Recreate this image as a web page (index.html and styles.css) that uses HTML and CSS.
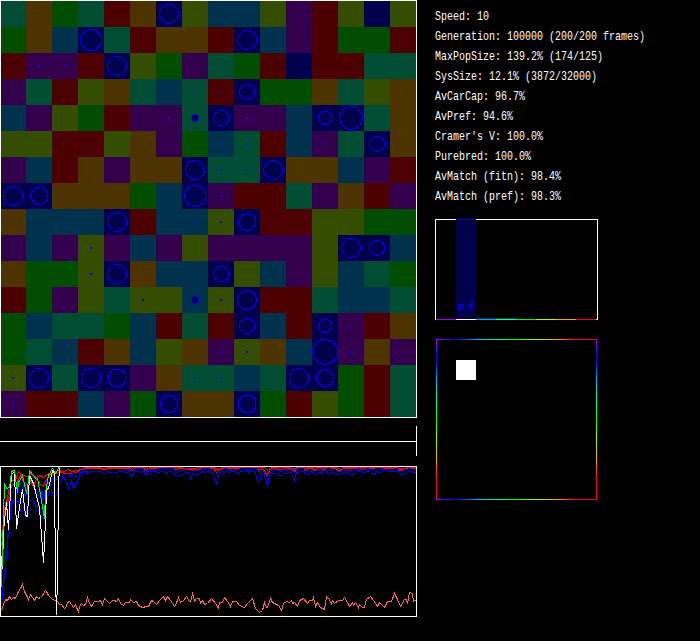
FILE: index.html
```html
<!DOCTYPE html>
<html lang="en">
<head>
    <meta charset="UTF-8">
    <meta name="viewport" content="width=device-width, initial-scale=1.0">
    <title>Population Simulation</title>
    <link rel="stylesheet" href="styles.css">
</head>
<body>
    <main class="simulation">
        <div class="left">
            <svg id="world" class="world" width="417" height="418"></svg>

            <svg class="timeline" width="417" height="30">
                <path d="M0 15.5H416.5M416.5 0V30"/>
            </svg>

            <svg class="history" width="417" height="151">
                <g transform="translate(.5 .5)">
                    <polyline class="line salmon" points="1,144 3,138 5,133 7,134 9,130 11,133 13,131 15,132 17,127 20,122 22,118 24,125 26,129 28,133 30,128 32,131 34,134 36,130 38,132 40,131 42,129 45,124 46,125 48,129 51,132 54,134 57,135 59,138 61,138 64,142 66,140 67,136 69,135 71,138 73,141 75,138 76,141 78,145 79,140 81,137 83,139 85,138 87,131 89,137 91,140 94,135 97,135 100,134 102,138 104,132 107,135 109,137 112,134 114,134 116,135 118,132 120,137 123,139 125,136 129,136 130,133 133,136 136,135 138,139 142,141 146,140 148,140 151,134 153,135 156,138 159,134 163,130 165,134 167,130 170,134 174,140 175,139 178,131 180,136 183,134 186,130 189,135 191,134 192,126 194,135 196,132 199,132 200,137 202,134 204,138 207,137 211,132 215,137 218,142 219,136 222,136 224,131 227,135 230,140 232,135 236,135 239,139 244,141 247,137 252,132 255,142 259,146 262,144 264,136 266,141 267,141 270,132 272,136 278,139 281,144 283,137 286,135 289,136 291,134 292,137 294,136 297,140 299,134 303,132 307,137 309,134 312,134 313,131 315,140 317,136 320,141 324,143 326,130 328,132 331,137 332,134 334,137 338,134 342,134 344,131 347,136 349,140 352,136 353,139 355,136 358,141 359,138 362,141 364,141 366,133 370,130 373,134 377,140 379,136 381,138 384,141 387,135 391,135 394,127 397,133 400,140 404,133 406,133 407,137 409,126 412,127 413,135 416,133"/>
                    <polyline class="line blue" points="1,130 4,108 6,85 9,58 12,34 14,35 16,25 18,36 20,45 22,35 25,50 28,28 30,35 33,32 36,45 38,36 40,46 43,55 46,35 50,20 54,33 58,20 63,9 68,22 71,14 73,22 77,14 80,8 85,4 87,8 90,5 100,5 103,8 108,5 112,7 118,5 122,5 125,6 128,5 131,10 134,4 140,6 143,4 145,9 148,5 150,8 153,5 158,6 163,4 166,8 168,5 173,6 176,10 179,8 182,9 185,6 188,6 190,12 192,7 197,9 200,6 202,3 205,7 208,4 212,6 215,15 216,17 218,9 220,6 222,8 225,5 230,6 233,4 238,8 240,5 245,4 249,6 252,4 255,6 257,16 259,16 261,7 264,9 267,20 269,10 272,7 277,7 281,10 284,7 290,6 292,9 294,14 296,6 303,5 305,8 308,8 310,4 315,8 319,5 321,8 325,4 328,8 331,5 335,8 340,8 344,5 348,8 353,8 356,5 360,4 362,6 367,5 370,5 373,9 376,5 379,7 382,4 389,5 395,5 398,4 400,8 404,8 408,4 411,6 413,5 416,8"/>
                    <polyline class="line blue" points="1,138 3,118 5,100 7,74 9,50 11,28 14,20 17,27 20,12 24,28 26,31 28,20 32,14 35,24 38,30 41,22 43,38 46,14 50,18 53,10 55,14 60,5 64,6 68,10 71,6 73,12 78,8 84,3 90,2 100,2 103,4 110,2 121,2 124,4 129,3 131,5 133,2 142,2 145,6 149,3 153,5 156,3 163,2 169,3 173,2 176,6 179,4 187,3 191,4 198,4 201,2 208,2 212,3 215,5 217,8 220,5 224,2 230,4 235,3 241,2 249,3 253,2 256,3 260,6 262,3 265,8 268,13 270,5 273,3 280,5 285,4 290,3 294,6 297,2 303,2 305,5 310,2 315,5 317,3 320,5 322,3 325,6 327,3 332,4 335,3 339,6 342,3 348,4 354,4 359,2 362,4 367,2 372,3 375,5 380,2 385,3 391,2 397,2 399,5 403,3 413,2 416,4"/>
                    <polyline class="line red" points="1,80 3,58 5,42 7,38 9,27 11,19 16,17 20,9 25,19 30,14 33,20 36,12 40,18 43,20 45,14 50,8 55,7 60,6 66,7 70,7 72,5 76,6 80,3 86,2 100,2 103,3 110,2 130,2 132,4 135,1 142,1 146,4 149,1 153,2 160,1 173,1 175,3 179,2 186,2 189,3 198,3 201,1 206,1 213,2 216,6 219,3 224,1 229,2 235,2 241,1 256,1 259,4 262,2 267,9 270,2 273,2 280,3 285,2 291,2 294,5 296,1 303,1 305,4 309,1 315,4 319,1 322,4 326,1 335,2 339,5 342,1 346,2 353,2 359,1 362,3 365,1 372,2 376,1 389,2 397,1 399,4 403,2 408,1 413,2 416,3"/>
                    <polyline class="line red" points="1,71 3,55 4,41 7,31 9,20 11,14 15,14 18,5 22,9 27,10 30,7 35,12 39,9 43,11 48,7 53,7 57,4 63,5 68,3 72,5 80,3 85,1 100,1 103,2 107,1 145,1 148,2 152,1 175,1 190,2 202,1 213,1 217,3 222,1 255,1 264,1 268,5 271,1 290,1 293,3 296,1 313,1 335,1 340,3 343,1 395,1 400,2 416,1"/>
                    <polyline class="line white" points="0,127 1,90 2,102 3,64 6,36 8,63 11,7 14,6 16,62 19,41 22,23 25,49 27,50 29,9 33,17 35,25 39,41 41,69 43,96 45,54 46,23 48,22 52,4 54,7 55,113 56,148 57,111 58,20 59,0"/>
                    <polyline class="line green" points="1,121 2,80 4,17 6,22 9,21 11,6 12,4 14,4 17,26 18,16 22,9 26,27 28,15 29,4 36,13 37,12 41,34 44,52 45,27 48,9 52,2 55,7 58,2 59,0"/>
                </g>
                <rect class="frame" x=".5" y=".5" width="416" height="150"/>
            </svg>
        </div>

        <div class="right">
            <ul class="stats">
                <li>Speed: 10</li>
                <li>Generation: 100000 (200/200 frames)</li>
                <li>MaxPopSize: 139.2% (174/125)</li>
                <li>SysSize: 12.1% (3872/32000)</li>
                <li>AvCarCap: 96.7%</li>
                <li>AvPref: 94.6%</li>
                <li>Cramer's V: 100.0%</li>
                <li>Purebred: 100.0%</li>
                <li>AvMatch (fitn): 98.4%</li>
                <li>AvMatch (pref): 98.3%</li>
            </ul>

            <svg class="histogram" width="163" height="101">
                <rect class="frame" x=".5" y=".5" width="162" height="100"/>
                <rect x="21" y="0" width="20" height="1" fill="#0000ff"/>
                <rect x="21" y="2" width="20" height="98" fill="#00004d"/>
                <rect x="41" y="99" width="20" height="1" fill="#00314d"/>
                <rect x="61" y="99" width="20" height="1" fill="#004d34"/>
                <rect x="1" y="100" width="20" height="1" fill="#a500ff"/>
                <rect x="41" y="100" width="20" height="1" fill="#00a5ff"/>
                <rect x="61" y="100" width="20" height="1" fill="#00ffa5"/>
                <rect x="81" y="100" width="20" height="1" fill="#00ff00"/>
                <rect x="101" y="100" width="20" height="1" fill="#a5ff00"/>
                <rect x="121" y="100" width="20" height="1" fill="#ffa500"/>
                <rect x="141" y="100" width="20" height="1" fill="#ff0000"/>
                <text x="23" y="91">m</text>
                <text x="33" y="91">f</text>
            </svg>

            <div class="spectrum">
                <div class="marker"></div>
            </div>
        </div>
    </main>

    <script src="world.js"></script>
</body>
</html>
```
FILE: styles.css
```css
body {
    margin: 0;
    background-color: #000;
    color: #fff;
    font-family: "Liberation Mono", "DejaVu Sans Mono", monospace;
    font-size: 10px;
}
.simulation {
    display: flex;
    gap: 18px;
}
.left,
.right {
    display: flex;
    flex-direction: column;
}
svg {
    display: block;
    shape-rendering: crispEdges;
}
.timeline {
    margin: 8px 0 10px;
    stroke: #fff;
}
.frame {
    fill: none;
    stroke: #fff;
}

/* world cells */
.R { fill: #4d0000; }
.O { fill: #4d3300; }
.Y { fill: #344d00; }
.G { fill: #004d00; }
.T { fill: #004d34; }
.B { fill: #00314d; }
.N { fill: #00004d; }
.P { fill: #34004d; }
.group {
    fill: #00004d;
    stroke: #0000ff;
}
.small {
    shape-rendering: geometricPrecision;
}
.dot {
    fill: #0000ff;
}

/* history lines */
.line {
    fill: none;
    stroke-width: 1;
}
.salmon { stroke: #ff6464; }
.blue { stroke: #0000ff; }
.red { stroke: #ff0000; }
.white { stroke: #fff; }
.green { stroke: #00ff00; }

.stats {
    list-style: none;
    margin: 0;
    padding: 7px 0 12px;
}
.stats li {
    height: 20px;
    line-height: 20px;
    white-space: pre;
    transform: scaleY(1.3);
}
.histogram text {
    fill: #0000ff;
    font-size: 11px;
}
.spectrum {
    --hues: #a500ff 0, #0000e6 20px, #00a5ff 40px, #00ffa5 60px, #00ff00 80px, #a5ff00 100px, #ffa500 120px, #ff0000 140px;
    box-sizing: border-box;
    width: 161px;
    height: 161px;
    margin: 19px 0 0 1px;
    padding: 21px 20px;
    background:
        linear-gradient(to right, var(--hues)) top / 100% 1px no-repeat,
        linear-gradient(to right, var(--hues)) bottom / 100% 1px no-repeat,
        linear-gradient(to bottom, var(--hues)) left / 1px 100% no-repeat,
        linear-gradient(to bottom, var(--hues)) right / 1px 100% no-repeat;
}
.marker {
    width: 20px;
    height: 20px;
    background-color: #fff;
}
```
FILE: world.js
```javascript
const CELL = 26;

// One letter per cell, the letter is the colour class
const cells = [
    'TOGTRONYBBYPRYNY',
    'GOBNTROORNBPRGGR',
    'RPPRNYGPTGRNRRTT',
    'PTRYOTBTRNGGOTYO',
    'BPYGRPPTNPPBNNTO',
    'YYRRYOPGBTRBPTNO',
    'PBROPOONTTNOOBPR',
    'NNOOOGBNPRRTPORP',
    'OBBBNRBBYNRRYYGG',
    'PBPYPBPYPPPPYNNB',
    'OGGYNOBBNYBPYBTG',
    'RGPYTYYBYNRRTBBT',
    'GBTTGBRTRNBRNPRO',
    'GTBROBYOPYOBNPOP',
    'YNTNNPOTTBTNNGRT',
    'PRRBPGNOONGRYGRT'
];

// [row, column, diameter]
const groups = [
    [0, 6, 20], [1, 3, 22], [1, 9, 20], [2, 4, 20], [3, 9, 16],
    [4, 7, 8], [4, 8, 16], [4, 12, 14], [4, 13, 24], [5, 14, 16],
    [6, 7, 20], [6, 10, 20], [7, 0, 20], [7, 1, 18], [7, 7, 22],
    [8, 4, 20], [8, 9, 18], [9, 13, 20], [9, 14, 16], [10, 4, 20],
    [10, 8, 16], [11, 7, 8], [11, 9, 20], [12, 9, 16], [12, 12, 14],
    [13, 12, 26], [14, 1, 20], [14, 3, 20], [14, 4, 19], [14, 11, 20],
    [14, 12, 18], [15, 6, 18], [15, 9, 19]
];

// [row, column]
const dots = [
    [2, 1], [2, 2], [3, 7], [3, 8], [4, 6], [4, 9], [5, 8], [5, 9], [5, 12],
    [6, 8], [6, 9], [7, 8], [8, 7], [8, 8], [9, 3], [10, 3], [11, 5], [11, 8],
    [12, 13], [13, 8], [13, 9], [13, 13], [14, 0], [14, 7], [14, 8], [15, 0]
];

const world = document.getElementById('world');

function add(tag, attributes) {
    const element = document.createElementNS('http://www.w3.org/2000/svg', tag);
    for (const name in attributes) {
        element.setAttribute(name, attributes[name]);
    }
    world.appendChild(element);
}

cells.forEach((row, r) => {
    [...row].forEach((colour, c) => {
        add('rect', { class: colour, x: c * CELL, y: r * CELL + 1, width: CELL, height: CELL });
    });
});

groups.forEach(([r, c, size]) => {
    add('circle', {
        class: size < 10 ? 'group small' : 'group',
        cx: c * CELL + 13,
        cy: r * CELL + 14,
        r: (size - 1) / 2
    });
});

dots.forEach(([r, c]) => {
    add('rect', { class: 'dot', x: c * CELL + 12, y: r * CELL + 13, width: 2, height: 2 });
});

add('rect', { class: 'frame', x: 0.5, y: 0.5, width: 416, height: 417 });
```
